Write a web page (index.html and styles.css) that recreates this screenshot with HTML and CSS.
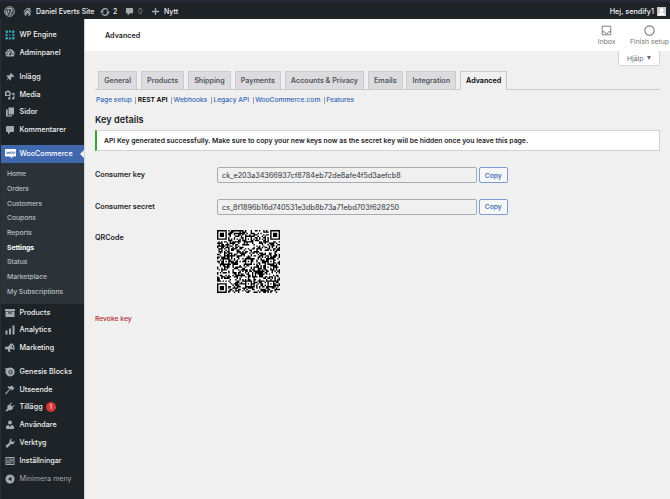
FILE: index.html
```html
<!DOCTYPE html>
<html lang="sv">
<head>
	<meta charset="UTF-8">
	<title>Advanced</title>
	<link rel="stylesheet" href="styles.css">
</head>
<body>
	<div id="adminbar">
		<svg class="wp" viewBox="0 0 20 20"><circle cx="10" cy="10" r="9" fill="none" stroke="#a7aaad" stroke-width="1.5"/><circle cx="10" cy="10" r="7.4" fill="#a7aaad"/><path d="M3.5 6.5h4M5 6.8l3.6 9.6 2-6L9 6.6M8.500 6.500h4M11 6.800l3 9 2-6c.5-2-1-2.500-.8-4" fill="none" stroke="#1d2327" stroke-width="1.5"/></svg>
		<svg class="house" viewBox="0 0 20 20"><path d="M10 1l3 3V2h3v5l3 3-1.500 1.500L10 4l-7.500 7.500L1 10zM10 6l6.500 6.500V19H12v-5H8v5H3.500v-6.500z"/></svg>
		<span class="site">Daniel Everts Site</span>
		<svg class="update" viewBox="0 0 20 20"><path d="M4 8a6.500 6.500 0 0 1 12-1M16 12A6.500 6.500 0 0 1 4 13" fill="none" stroke="#a7aaad" stroke-width="2.600"/><path d="M0 11l3.500-5 4.500 5zM12 9l4.500 5 3.500-5z"/></svg>
		<span class="count">2</span>
		<svg class="bubble" viewBox="0 0 20 20"><path d="M4 2h12q2 0 2 2v8q0 2-2 2h-5l-5 5v-5H4q-2 0-2-2V4q0-2 2-2z"/></svg>
		<span class="zero">0</span>
		<svg class="plus" viewBox="0 0 20 20"><path d="M8.500 2h3v6.500H18v3h-6.500V18h-3v-6.500H2v-3h6.500z"/></svg>
		<span>Nytt</span>
		<span class="hello">Hej, sendify1</span>
		<svg class="avatar" viewBox="0 0 18 18"><path d="M0 0h18v18H0z" fill="#c9c9c9"/><circle cx="9" cy="6.500" r="3.800" fill="#fff"/><path d="M2 17q0-6 7-6t7 6z" fill="#fff"/></svg>
	</div>
	<div id="wrap">
		<div id="menu">
			<div class="item"><svg viewBox="0 0 20 20" class="engine"><path d="M1 1h4l2 3-3 3-3-2zM8 1h4v3l-2 2-2-2zM15 1h4v4l-3 2-3-3zM1 8h3l2 2-2 2H1zM16 8h3v4h-3l-2-2zM1 15l3-2 3 3-2 3H1zM8 19v-3l2-2 2 2v3zM13 16l3-3 3 2v4h-4z"/><circle cx="10" cy="10" r="1.500"/></svg>WP Engine</div>
			<div class="item"><svg viewBox="0 0 20 20"><path fill-rule="evenodd" d="M3 17a9 9 0 1 1 14 0zM9 4v3h2V4zM4 7l2 2 1.400-1.400-2-2zM2.500 11v2h3v-2zM14.500 11v2h3v-2zM14 5l-5 7q-1 3 1 3t2-2z"/></svg>Adminpanel</div>
			<div class="item gap"><svg viewBox="0 0 20 20"><path d="M11 1l8 8-2 1-2-1-3 3q1 3-1 5l-4-4-6 6 5-7-3-4q2-2 5-1l3-3z"/></svg>Inlägg</div>
			<div class="item"><svg viewBox="0 0 20 20"><path fill-rule="evenodd" d="M0 3h3l1-2h4l1 2h2v9H0zM5.500 4.500a3 3 0 1 0 .1 0zM13 6h6v10a2.500 2.500 0 1 1-2-2V9h-4zM11 13v4a2.500 2.500 0 1 1-2-2.500V13z"/></svg>Media</div>
			<div class="item"><svg viewBox="0 0 20 20"><path d="M7 1h11v14H7zM2 5h3.500v11.500H14V19H2z"/></svg>Sidor</div>
			<div class="item"><svg viewBox="0 0 20 20"><path d="M4 2h12q2 0 2 2v8q0 2-2 2h-5l-5 5v-5H4q-2 0-2-2V4q0-2 2-2z"/></svg>Kommentarer</div>
			<div class="item gap current"><svg viewBox="0 0 22 22"><path d="M2 2h18q2 0 2 2v11q0 2-2 2h-6l1 4-5-4H2q-2 0-2-2V4q0-2 2-2z"/><path d="M3 7l1.500 5L7 8l1.500 4L10 7" fill="none" stroke="#4068af" stroke-width="1.500"/><circle cx="13" cy="9.500" r="1.800" fill="none" stroke="#4068af" stroke-width="1.400"/><circle cx="18" cy="9.500" r="1.800" fill="none" stroke="#4068af" stroke-width="1.400"/></svg>WooCommerce</div>
			<ul class="submenu">
				<li>Home</li>
				<li>Orders</li>
				<li>Customers</li>
				<li>Coupons</li>
				<li>Reports</li>
				<li class="active">Settings</li>
				<li>Status</li>
				<li>Marketplace</li>
				<li>My Subscriptions</li>
			</ul>
			<div class="item"><svg viewBox="0 0 20 20"><path fill-rule="evenodd" d="M0 2h20v4H0zM1 7h18v11H1zM6 9v2h8V9z"/></svg>Products</div>
			<div class="item"><svg viewBox="0 0 20 20"><path d="M1 11h4v8H1zM8 7h4v12H8zM15 1h4v18h-4z"/></svg>Analytics</div>
			<div class="item"><svg viewBox="0 0 20 20"><path fill-rule="evenodd" d="M15 1q5 4 4 11l-1 2q-4-3-8-2l1 5-4 1-2-6-4 1q-2-3-1-5 8 0 11-7zM14 4q-2 4 3 7 0-4-3-7z"/></svg>Marketing</div>
			<div class="item gap"><svg viewBox="0 0 20 20"><path fill-rule="evenodd" d="M0 3l6-1q10-3 13 5 2 10-8 12-7 0-9-6l-2-3 2-2zM11 6.500a4 4 0 1 0 .1 0zM11 8a2.500 2.500 0 1 1-.1 0z"/></svg>Genesis Blocks</div>
			<div class="item"><svg viewBox="0 0 20 20"><path d="M7 2l2 2 4-3 6 5-5 5-3-3-9 11-2-2L9 8 5 4z"/></svg>Utseende</div>
			<div class="item"><svg viewBox="0 0 20 20"><path d="M12 1l2 1-3 4 3 3 4-3 1 2-4 3 1 2q-3 5-8 3l-5 3-2-2 4-4Q3 8 8 5l1 1z"/></svg>Tillägg<b class="badge">1</b></div>
			<div class="item"><svg viewBox="0 0 20 20"><circle cx="10" cy="5" r="4"/><path d="M2 18v-4q0-4 5-4l3 4 3-4q5 0 5 4v4z"/></svg>Användare</div>
			<div class="item"><svg viewBox="0 0 20 20"><path d="M14 1l-2 4 3 3 4-2q1 5-3 6-2 1-4 0l-7 7q-2 1-3-1t0-3l7-6q-1-7 5-8z"/></svg>Verktyg</div>
			<div class="item"><svg viewBox="0 0 20 20"><path fill-rule="evenodd" d="M1 2h18v16H1zM3 4v12h6V4zM11 4v12h6V4z"/><path d="M5.200 5h1.500v10H5.200zM4 11h4v2H4zM13.200 5h1.500v10h-1.500zM12 7h4v2h-4z"/></svg>Inställningar</div>
			<div class="item collapse"><svg viewBox="0 0 20 20"><path fill-rule="evenodd" d="M10 1a9 9 0 1 0 .1 0zM13 5.500v9L6 10z"/></svg>Minimera meny</div>
		</div>
		<div id="content">
			<div class="top">
				<h1>Advanced</h1>
				<div class="action inbox"><svg viewBox="0 0 18 18"><path d="M2 2h14v14H2zM2 11h3.500q1 3 3.500 3t3.500-3H16" fill="none" stroke="#757575" stroke-width="1.500"/></svg>Inbox</div>
				<div class="action finish"><svg viewBox="0 0 18 18"><circle cx="9" cy="9" r="7.600" fill="none" stroke="#757575" stroke-width="1.700"/></svg>Finish setup</div>
			</div>
			<div class="help">Hjälp<i></i></div>
			<div class="tabs">
				<a>General</a>
				<a>Products</a>
				<a>Shipping</a>
				<a>Payments</a>
				<a>Accounts &amp; Privacy</a>
				<a>Emails</a>
				<a>Integration</a>
				<a class="on">Advanced</a>
			</div>
			<div class="links"><a>Page setup</a><s></s><a class="on">REST API</a><s></s><a>Webhooks</a><s></s><a>Legacy API</a><s></s><a>WooCommerce.com</a><s></s><a>Features</a></div>
			<h2>Key details</h2>
			<div class="notice">API Key generated successfully. Make sure to copy your new keys now as the secret key will be hidden once you leave this page.</div>
			<div class="row">
				<label>Consumer key</label>
				<div class="field">ck_e203a34366937cf8784eb72de8afe4f5d3aefcb8</div>
				<button>Copy</button>
			</div>
			<div class="row">
				<label>Consumer secret</label>
				<div class="field secret">cs_8f1896b16d740531e3db8b73a71ebd703f628250</div>
				<button>Copy</button>
			</div>
			<div class="row qrrow">
				<label>QRCode</label>
				<svg id="qr" viewBox="0 0 45 45"><path fill="#000"/></svg>
			</div>
			<a class="revoke">Revoke key</a>
		</div>
	</div>
	<script src="qr.js"></script>
</body>
</html>
```
FILE: styles.css
```css
* {
	box-sizing:border-box;
	margin:0;
	padding:0;
}
body {
	width:670px;
	height:499px;
	overflow:hidden;
	background:#f0f0f1;
	color:#1d2327;
	font-family:Inter, "Liberation Sans", sans-serif;
	font-size:7px;
	line-height:10px;
}
svg {
	display:block;
	flex:none;
	fill:#a7aaad;
}
#adminbar {
	display:flex;
	align-items:center;
	height:19px;
	padding:2px 4px 0 4px;
	border-top:2px solid #2b2733;
	background:#1d2327;
	color:#f0f0f1;
	font-weight:500;
}
#adminbar .wp {
	width:11px;
	height:11px;
}
#adminbar .house {
	width:9px;
	height:9px;
	margin:0 4px 0 8px;
}
#adminbar .site {
	width:56px;
	white-space:nowrap;
}
#adminbar .update {
	width:10px;
	height:10px;
	margin:0 3px 0 8px;
}
#adminbar .count {
	width:5px;
}
#adminbar .bubble {
	width:9px;
	height:9px;
	margin:0 4px 0 7px;
}
#adminbar .zero {
	width:5px;
	color:#7d8185;
}
#adminbar .plus {
	width:9px;
	height:9px;
	margin:0 4px 0 8px;
}
#adminbar .hello {
	margin-left:auto;
	font-size:7.250px;
}
#adminbar .avatar {
	width:9px;
	height:9px;
	margin-left:3px;
}
#wrap {
	display:flex;
	height:480px;
}
#menu {
	width:84px;
	padding-top:7.500px;
	border-left:1px solid #2b2d33;
	background:#1d2327;
	color:#f0f0f1;
}
.item {
	display:flex;
	align-items:center;
	position:relative;
	height:17.85px;
	padding-left:4px;
	font-size:7.2px;
	font-weight:500;
	white-space:nowrap;
}
.item svg {
	width:10px;
	height:10px;
	margin-right:4.500px;
}
.item .engine {
	fill:#36a3b5;
}
.gap {
	margin-top:5.700px;
}
.current {
	background:#4068af;
	color:#fff;
}
.current svg {
	width:11px;
	height:11px;
	margin-right:3.500px;
	fill:#fff;
}
/* arrow pointing at the open section */
.current:after {
	content:"";
	position:absolute;
	top:5px;
	right:0;
	border:4px solid transparent;
	border-left:0;
	border-right-color:#f0f0f1;
}
.submenu {
	height:140.8px;
	padding:4.500px 0 0 6px;
	background:#2c3338;
	color:#b9bdc1;
	list-style:none;
}
.submenu li {
	height:14.7px;
	line-height:14.7px;
	font-size:6.800px;
	font-weight:500;
	letter-spacing:-.04px;
}
.submenu .active {
	color:#fff;
	font-weight:700;
}
.badge {
	width:10px;
	height:10px;
	margin-left:3px;
	border-radius:5px;
	background:#d63638;
	font-size:6px;
	font-weight:500;
	text-align:center;
}
.collapse {
	color:#a7aaad;
	font-weight:400;
}
#content {
	flex:1;
	border-left:1px solid #d5d5d7;
}
.top {
	display:flex;
	position:relative;
	height:32px;
	padding-left:20px;
	background:#fff;
}
h1 {
	flex:1;
	font-size:7.200px;
	font-weight:600;
	line-height:34px;
}
.action {
	display:flex;
	flex-direction:column;
	align-items:center;
	padding-top:6px;
	color:#757575;
	font-size:6.800px;
	white-space:nowrap;
}
.action svg {
	width:11px;
	height:11px;
	margin-bottom:1px;
}
.inbox {
	margin-right:13.500px;
}
.finish {
	width:41px;
}
.help {
	width:42px;
	height:15px;
	margin:0 10px 0 auto;
	padding-left:8px;
	border:1px solid #d5d5d7;
	border-top:0;
	border-radius:0 0 2px 2px;
	background:#fff;
	color:#646970;
	font-size:6.800px;
	line-height:15px;
}
.help i {
	display:inline-block;
	margin:0 0 1px 4px;
	border:2px solid transparent;
	border-top:4px solid #646970;
	border-bottom:0;
}
.tabs {
	display:flex;
	gap:3.700px;
	height:19px;
	margin:5px 10px 0 10px;
	padding-left:3px;
	border-bottom:1px solid #c9cbce;
}
.tabs a {
	height:18px;
	padding:0 5.150px;
	border:1px solid #c9cbce;
	border-bottom:0;
	background:#dcdcde;
	color:#50575e;
	font-size:7.170px;
	font-weight:600;
	line-height:18px;
	white-space:nowrap;
}
.tabs .on {
	height:19px;
	background:#f0f0f1;
	color:#000;
}
.links {
	display:flex;
	margin:5px 0 0 11px;
	color:#3566b5;
	font-size:6.680px;
	font-weight:500;
}
.links s {
	width:1px;
	height:7px;
	margin:2px 1.300px 0 3.700px;
	background:#a0a3a8;
}
.links .on {
	color:#000;
	font-weight:600;
}
h2 {
	margin:8px 0 0 10px;
	font-size:9.200px;
	font-weight:600;
	line-height:14px;
}
.notice {
	height:21px;
	margin:3px 10px 16px 10px;
	padding-left:7px;
	border:1px solid #d0d2d5;
	border-left:2px solid #2fa52f;
	background:#fff;
	font-size:6.830px;
	font-weight:600;
	line-height:19px;
	white-space:nowrap;
}
.row {
	display:flex;
	align-items:center;
	height:16px;
	margin:0 0 15.500px 10px;
}
.row label {
	width:122px;
	font-size:7.200px;
	font-weight:600;
}
.field {
	width:260px;
	height:16px;
	padding-left:4px;
	border:1px solid #a9acb0;
	border-radius:2px;
	color:#2c3338;
	font-size:7.250px;
	line-height:15px;
}
button {
	width:28.500px;
	height:16px;
	margin-left:2px;
	border:1px solid #7d9dd0;
	border-radius:2px;
	background:#f6f7f7;
	color:#3566b5;
	font-family:inherit;
	font-size:6.800px;
	font-weight:500;
}
.qrrow {
	align-items:flex-start;
	height:63px;
}
.qrrow label {
	padding-top:3px;
}
#qr {
	width:63px;
	height:63px;
	background:#fff;
}
.revoke {
	display:block;
	margin:21px 0 0 10px;
	color:#b32d2e;
	font-size:6.750px;
	font-weight:500;
}
```
FILE: qr.js
```js
var size = 45;
var seed = 8243;
var d = '';

// concentric square at cx, cy: dark everywhere but on one ring
function ring(x, y, cx, cy, gapRing) {
	return Math.max(Math.abs(x - cx), Math.abs(y - cy)) !== gapRing;
}

function isDark(x, y) {
	seed = (seed * 48271) % 2147483647;
	var corners = [[3, 3], [41, 3], [3, 41]];
	for (var i = 0; i < corners.length; i++) {
		var dist = Math.max(Math.abs(x - corners[i][0]), Math.abs(y - corners[i][1]));
		if (dist <= 4) {
			return dist !== 4 && ring(x, y, corners[i][0], corners[i][1], 2);
		}
	}
	var marks = [[22, 6], [6, 22], [22, 22], [38, 22], [22, 38], [38, 38]];
	for (var j = 0; j < marks.length; j++) {
		if (Math.abs(x - marks[j][0]) <= 2 && Math.abs(y - marks[j][1]) <= 2) {
			return ring(x, y, marks[j][0], marks[j][1], 1);
		}
	}
	if (x === 6 || y === 6) {
		return (x + y) % 2 === 0;
	}
	return seed / 2147483647 < 0.5;
}

for (var y = 0; y < size; y++) {
	for (var x = 0; x < size; x++) {
		if (isDark(x, y)) {
			d += 'M' + x + ' ' + y + 'h1v1h-1z';
		}
	}
}
document.querySelector('#qr path').setAttribute('d', d);
```
